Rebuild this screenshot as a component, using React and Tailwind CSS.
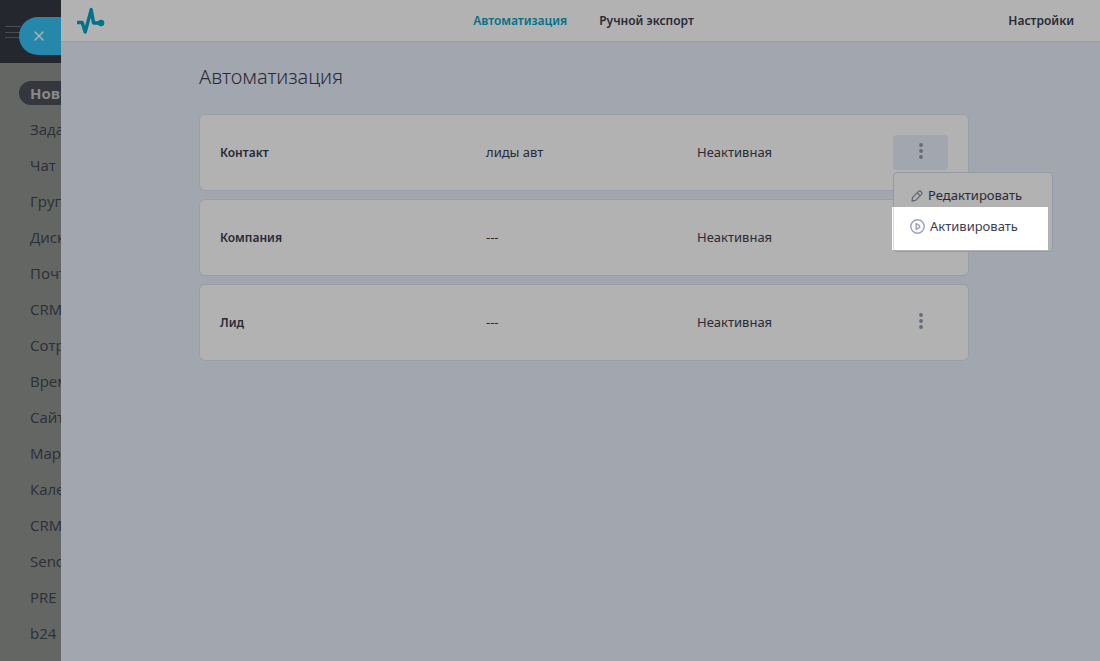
import React, { useState } from 'react';
import { X } from 'lucide-react';

const portalMenu = [
  'Новости', 'Задачи', 'Чат', 'Группы', 'Диск', 'Почта', 'CRM', 'Сотрудники',
  'Время', 'Сайты', 'Маркет', 'Календарь', 'CRM', 'Sender', 'PRE', 'b24',
];

const rows = [
  { id: 'contact', entity: 'Контакт', name: 'лиды авт', status: 'Неактивная' },
  { id: 'company', entity: 'Компания', name: '---', status: 'Неактивная' },
  { id: 'lead', entity: 'Лид', name: '---', status: 'Неактивная' },
];

const Logo = () => (
  <svg viewBox="0 0 28 28" className="w-7 h-7 fill-none stroke-[#00a5c5]" strokeWidth="3.4" strokeLinejoin="round">
    <path d="M0 15.5 H5.2 L8.2 25 L14.2 2.6 L16.6 16 H24" />
    <circle cx="24" cy="16" r="3.3" className="fill-[#00a5c5] stroke-none" />
  </svg>
);

const PencilIcon = () => (
  <svg viewBox="0 0 12 12" className="w-3 h-3 fill-none stroke-[#8c97ad]" strokeWidth="1.3" strokeLinejoin="round">
    <path d="M1 11 L1.6 7.4 L7.4 1.6 Q8.8 0.4 10.2 1.8 Q11.6 3.2 10.4 4.6 L4.6 10.4 Z" />
    <path d="M6.2 2.9 L9.1 5.8" />
  </svg>
);

const PlayIcon = () => (
  <svg viewBox="0 0 15 15" className="w-[15px] h-[15px] fill-none stroke-[#9aa5c0]" strokeWidth="1.5" strokeLinejoin="round">
    <circle cx="7.5" cy="7.5" r="6.7" />
    <path d="M6.2 4.6 V10.4 L9.6 8.4 V6.6 Z" />
  </svg>
);

const Dots = () => (
  <svg viewBox="0 0 4 16" className="w-1 h-4 fill-[#8f9ab2]">
    <circle cx="2" cy="2" r="1.9" />
    <circle cx="2" cy="8" r="1.9" />
    <circle cx="2" cy="14" r="1.9" />
  </svg>
);

function Sidebar() {
  return (
    <aside className="w-[61px] shrink-0 overflow-hidden bg-[#8f928f] font-['Open_Sans','Noto_Sans',sans-serif]">
      <div className="relative h-[63px] pt-[26px] pl-[5px] bg-[#343a42]">
        <div className="w-4 h-3 flex flex-col justify-between">
          <span className="h-px bg-[#6b7078]" />
          <span className="h-px bg-[#6b7078]" />
          <span className="h-px bg-[#6b7078]" />
        </div>
        <button
          aria-label="Закрыть"
          className="absolute top-[17px] right-0 w-[42px] h-[38px] pr-[2px] rounded-l-full bg-[#35c3f4] text-white flex items-center justify-center"
        >
          <X size={16} strokeWidth={2} />
        </button>
      </div>
      <nav className="pt-3 pl-[19px] text-[15px] leading-6 whitespace-nowrap">
        {portalMenu.map((item, i) => (
          <div key={i} className="h-9 flex items-center">
            <a
              href="#"
              className={i === 0 ? 'pl-[11px] pr-4 rounded-l-full bg-[#4b4f5a] text-[#c3c5c8] font-bold' : 'pl-[11px] text-[#414450]'}
            >
              {item}
            </a>
          </div>
        ))}
      </nav>
    </aside>
  );
}

function ActionMenu() {
  return (
    <div className="absolute top-full left-0 z-10 mt-[2px] w-40 h-20 pt-[7px] flex flex-col rounded border border-[#d3dcec] bg-white text-[13px]">
      <button className="h-[31px] pl-[17px] flex items-center gap-[5px]">
        <PencilIcon />
        Редактировать
      </button>
      <button className="h-[31px] pl-4 flex items-center gap-[5px]">
        <PlayIcon />
        Активировать
      </button>
      {/* Spotlight: dims everything around the highlighted item */}
      <span className="absolute top-[34px] -left-[2px] w-[156px] h-[43px] pointer-events-none shadow-[0_0_0_2000px_rgba(0,0,0,0.3)]" />
    </div>
  );
}

export default function App() {
  const [openRow, setOpenRow] = useState('contact');

  return (
    <div className="min-h-screen flex overflow-hidden">
      <Sidebar />
      <div className="flex-1 bg-[#e9eefa] text-[#3b3d4f] text-[13px] font-['Noto_Sans',sans-serif]">
        <header className="h-[42px] pl-4 pr-[26px] grid grid-cols-[1fr_auto_1fr] items-center bg-white border-b border-[#dde4f0] text-xs font-semibold">
          <a href="#" aria-label="Главная" className="w-7"><Logo /></a>
          <nav className="ml-4 flex gap-8">
            <a href="#" className="text-[#00a5c5]">Автоматизация</a>
            <a href="#">Ручной экспорт</a>
          </nav>
          <a href="#" className="justify-self-end">Настройки</a>
        </header>

        <main className="pl-[138px] pr-[131px] pt-5">
          <h1 className="text-[20px] leading-[30px] font-light">Автоматизация</h1>
          <table className="w-full mt-[14px] table-fixed border-separate border-spacing-x-0 border-spacing-y-2">
            <tbody>
              {rows.map((row) => (
                <tr
                  key={row.id}
                  className="h-[77px] [&>td]:bg-white [&>td]:border-y [&>td]:border-[#dde4f0] [&>td]:p-0"
                >
                  <td className="w-[287px] rounded-l-md border-l text-xs font-semibold"><span className="pl-5">{row.entity}</span></td>
                  <td className="w-[211px]">{row.name}</td>
                  <td>{row.status}</td>
                  <td className="w-[76px] rounded-r-md border-r">
                    <div className="relative w-[55px]">
                      <button
                        aria-label="Действия"
                        onClick={() => setOpenRow(openRow === row.id ? null : row.id)}
                        className={`w-full h-[35px] pb-1 flex items-center justify-center rounded ${openRow === row.id ? 'bg-[#e9eefa]' : ''}`}
                      >
                        <Dots />
                      </button>
                      {openRow === row.id && <ActionMenu />}
                    </div>
                  </td>
                </tr>
              ))}
            </tbody>
          </table>
        </main>
      </div>
    </div>
  );
}
